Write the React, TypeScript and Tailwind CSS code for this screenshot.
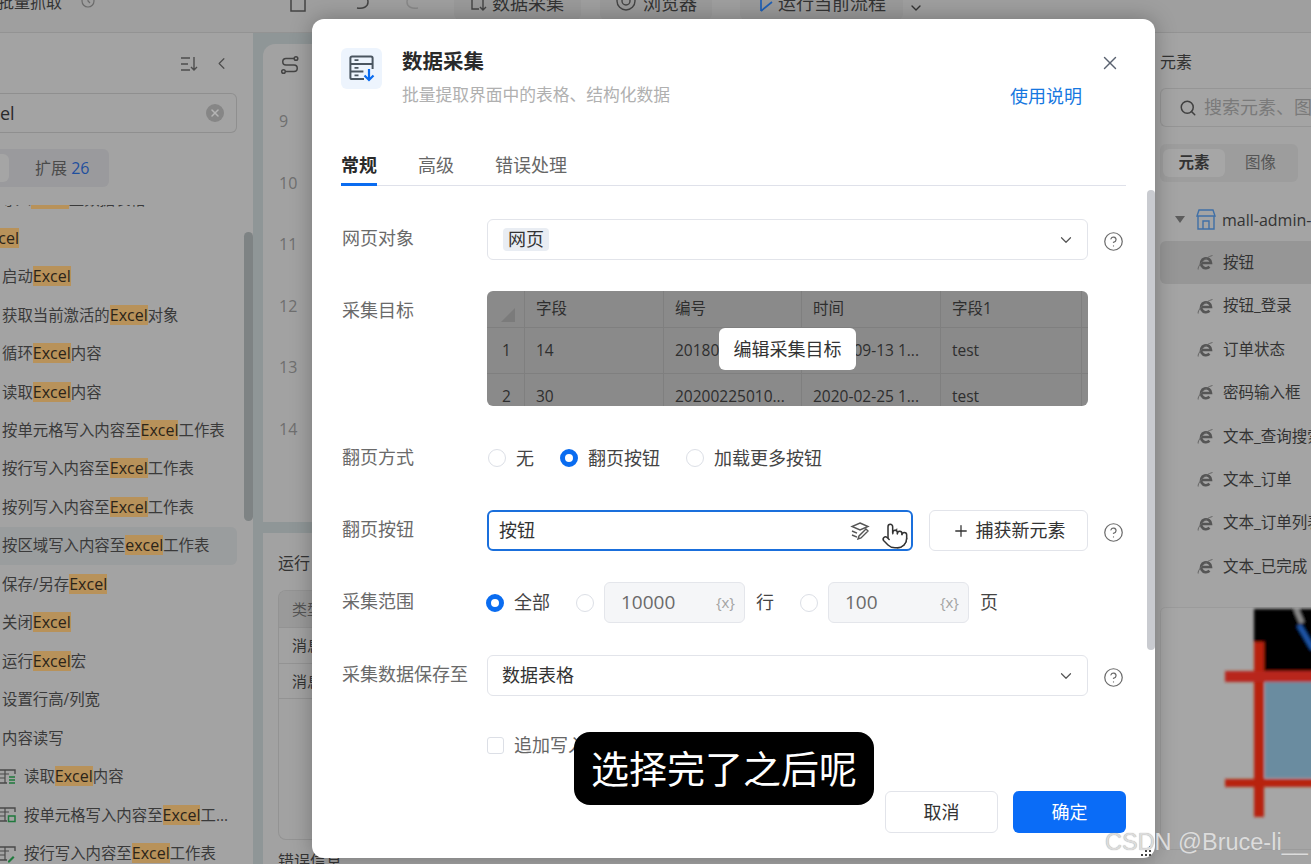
import { ChevronDown, ChevronLeft, CircleHelp, Plus, Pointer, Search, X } from 'lucide-react';
import type { ReactNode } from 'react';

const font = "font-['Open_Sans','Noto_Sans_CJK_SC',sans-serif]";

// highlighted search hit in the command list
const Hit = ({ children }: { children: ReactNode }) => (
  <span className="inline-block h-[20px] bg-[#b8925a] text-[16px] leading-[20px] text-[#2b2419]">{children}</span>
);

const SheetIcon = ({ kind }: { kind: 'lines' | 'box' | 'pen' }) => (
  <svg width="18" height="18" viewBox="0 0 18 18" fill="none" className="-ml-[4px] shrink-0">
    <path d="M17 6V2H1v13h8" stroke="#4a4a4a" strokeWidth="1.4" />
    <path d="M1 6h10M7 2v13M1 10h6" stroke="#4a4a4a" strokeWidth="1.2" />
    {kind === 'lines' && <path d="M11 9h6M11 12h6M11 15h6" stroke="#1f7a3d" strokeWidth="1.6" />}
    {kind === 'box' && <rect x="10.5" y="10" width="6.5" height="5.5" stroke="#1f7a3d" strokeWidth="1.5" />}
    {kind === 'pen' && <path d="M10 16l5-5 1.5 1.5-5 5H10z" fill="#1f7a3d" />}
  </svg>
);

const ListRow = ({ children, active }: { children: ReactNode; active?: boolean }) => (
  <div className={`flex h-[38.47px] w-[237px] items-center gap-[8px] whitespace-nowrap rounded-r-md pl-[2px] text-[15.4px] text-[#3a3a3a] ${active ? 'bg-[#9a9d9e]' : ''}`}>
    {children}
  </div>
);

const Sidebar = () => (
  <div className="relative flex h-full w-[253px] shrink-0 flex-col overflow-hidden bg-[#a3a3a3]">
    <div className="flex items-center justify-end gap-[14px] pr-[22px] pt-[21px] text-[#4d4d4d]">
      <svg width="18" height="16" viewBox="0 0 18 16" fill="none" stroke="#4d4d4d" strokeWidth="1.4">
        <path d="M1 2h9M1 8h7M1 14h9M14 1v13M11 11l3 3 3-3" />
      </svg>
      <ChevronLeft size={19} strokeWidth={1.5} />
    </div>
    <div className="mt-[20px] flex h-[40px] w-[237px] items-center justify-between rounded-r-md border border-l-0 border-[#8f8f8f] pr-[12px] text-[18px] text-[#2a2a2a]">
      <span>el</span>
      <span className="flex h-[18px] w-[18px] items-center justify-center rounded-full bg-[#868686]">
        <X size={12} strokeWidth={3} className="text-[#b5b5b5]" />
      </span>
    </div>
    <div className="mt-[16px] flex h-[38px] w-[109px] items-center rounded-r-md bg-[#9a9a9d] pr-[4px]">
      <span className="h-[28px] w-[9px] rounded-r-md bg-[#a5a5a5]" />
      <span className="ml-[26px] whitespace-nowrap text-[16px] text-[#4a4a4a]">
        扩展 <span className="text-[#1f4f9e]">26</span>
      </span>
    </div>
    <div className="mt-[18px] min-h-0 flex-1 overflow-hidden">
      <div className="-mt-[24.5px]">
        <ListRow><span className="-ml-[2px]">导入<Hit>Excel</Hit>至数据表格</span></ListRow>
        <ListRow><span className="-ml-[21px]"><Hit>Excel</Hit></span></ListRow>
        <ListRow><span>启动<Hit>Excel</Hit></span></ListRow>
        <ListRow><span>获取当前激活的<Hit>Excel</Hit>对象</span></ListRow>
        <ListRow><span>循环<Hit>Excel</Hit>内容</span></ListRow>
        <ListRow><span>读取<Hit>Excel</Hit>内容</span></ListRow>
        <ListRow><span>按单元格写入内容至<Hit>Excel</Hit>工作表</span></ListRow>
        <ListRow><span>按行写入内容至<Hit>Excel</Hit>工作表</span></ListRow>
        <ListRow><span>按列写入内容至<Hit>Excel</Hit>工作表</span></ListRow>
        <ListRow active><span>按区域写入内容至<Hit>excel</Hit>工作表</span></ListRow>
        <ListRow><span>保存/另存<Hit>Excel</Hit></span></ListRow>
        <ListRow><span>关闭<Hit>Excel</Hit></span></ListRow>
        <ListRow><span>运行<Hit>Excel</Hit>宏</span></ListRow>
        <ListRow><span>设置行高/列宽</span></ListRow>
        <ListRow><span>内容读写</span></ListRow>
        <ListRow><SheetIcon kind="lines" /><span>读取<Hit>Excel</Hit>内容</span></ListRow>
        <ListRow><SheetIcon kind="box" /><span>按单元格写入内容至<Hit>Excel</Hit>工...</span></ListRow>
        <ListRow><SheetIcon kind="pen" /><span>按行写入内容至<Hit>Excel</Hit>工作表</span></ListRow>
      </div>
    </div>
    {/* list scrollbar */}
    <div className="absolute left-[244px] top-[199px] h-[289px] w-[9px] rounded-full bg-[#7e8384]" />
  </div>
);

const Center = () => (
  <div className="flex h-full min-w-0 flex-1 flex-col gap-[11px] bg-[#8f9697] pl-[10px] pt-[11px]">
    <div className="h-[478px] rounded-tl-xl bg-[#a2a2a2] pl-[16px] text-[#6f6f6f]">
      <svg width="20" height="20" viewBox="0 0 20 20" fill="none" stroke="#444" strokeWidth="1.5" className="ml-[1px] mt-[11px]">
        <circle cx="16" cy="3.5" r="1.8" />
        <circle cx="3.5" cy="16.5" r="1.8" />
        <path d="M14 3.5H6a3 3 0 0 0 0 6.5h8a3 3 0 0 1 0 6.5H6" />
      </svg>
      <div className="mt-[16px] flex flex-col text-[16px] leading-[61.6px]">
        <span>9</span><span>10</span><span>11</span><span>12</span><span>13</span><span>14</span>
      </div>
    </div>
    <div className="min-h-0 flex-1 overflow-hidden bg-[#a2a2a2] pl-[15px] pt-[19px] text-[16px] text-[#333]">
      <div className="whitespace-nowrap leading-[22px]">运行日志</div>
      <div className="mt-[16px] h-[250px] overflow-hidden rounded-l-lg border border-r-0 border-[#939393] text-[15px]">
        <div className="flex h-[36px] items-center bg-[#9a9a9a] pl-[13px] text-[#555]">类型</div>
        <div className="flex h-[36px] items-center border-t border-[#939393] pl-[13px]">消息</div>
        <div className="flex h-[36px] items-center border-y border-[#939393] pl-[13px]">消息</div>
      </div>
      <div className="mt-[11px] whitespace-nowrap leading-[20px]">错误信息</div>
    </div>
  </div>
);

const IeIcon = () => (
  <svg width="17" height="17" viewBox="0 0 17 17" fill="none" className="shrink-0">
    <path d="M4 9h10a5 5 0 1 0-1.5 3.8" stroke="#555" strokeWidth="2.6" />
    <path d="M1.2 15.5C0 12.5 8 3 15.5 1.5" stroke="#666" strokeWidth="1" />
  </svg>
);

const RightRow = ({ label, active }: { label: string; active?: boolean }) => (
  <div className={`flex h-[43.4px] items-center gap-[9px] whitespace-nowrap rounded-l-md pl-[37px] text-[15.5px] text-[#333] ${active ? 'bg-[#969696]' : ''}`}>
    <IeIcon />
    <span>{label}</span>
  </div>
);

const RightPanel = () => (
  <div className="flex h-full w-[156px] shrink-0 flex-col overflow-hidden bg-[#a4a4a4] pl-[5px]">
    <div className="mt-[17px] shrink-0 text-[16px] leading-[24px] text-[#333]">元素</div>
    <div className="mt-[14px] flex h-[39px] w-[170px] shrink-0 items-center gap-[7px] whitespace-nowrap rounded-l-md border border-r-0 border-[#959595] pl-[18px] text-[18px] text-[#7a7a7a]">
      <Search size={18} className="shrink-0 text-[#404040]" />
      <span>搜索元素、图像</span>
    </div>
    <div className="mt-[17px] flex h-[38px] w-[138px] shrink-0 items-center rounded-md bg-[#9d9d9d] pl-[3px] text-[15.5px]">
      <span className="flex h-[28px] w-[62px] items-center justify-center rounded-md bg-[#a6a6a6] font-bold text-[#333]">元素</span>
      <span className="ml-[20px] text-[#555]">图像</span>
    </div>
    <div className="mt-[20px] flex h-[35px] shrink-0 items-center whitespace-nowrap pl-[15px] text-[16px] text-[#333]">
      <svg width="10" height="7" viewBox="0 0 10 7" className="shrink-0"><path d="M0 0h10L5 7z" fill="#5c5c5c" /></svg>
      <svg width="20" height="21" viewBox="0 0 20 21" fill="none" stroke="#3f6fa6" strokeWidth="1.4" className="ml-[11px] shrink-0">
        <path d="M3 1h14l2 6H1zM2 7v13h16V7M7 20v-8h6v8M1 7h18" />
      </svg>
      <span className="ml-[6px]">mall-admin-web</span>
    </div>
    <div className="mt-[4px] shrink-0">
      <RightRow label="按钮" active />
      <RightRow label="按钮_登录" />
      <RightRow label="订单状态" />
      <RightRow label="密码输入框" />
      <RightRow label="文本_查询搜索" />
      <RightRow label="文本_订单" />
      <RightRow label="文本_订单列表" />
      <RightRow label="文本_已完成" />
    </div>
    {/* blurred element preview */}
    <svg width="151" height="256" viewBox="1160 608 151 256" className="mt-[19px] shrink-0">
      <defs>
        <filter id="soft"><feGaussianBlur stdDeviation="1.4" /></filter>
      </defs>
      <rect x="1160.5" y="608.5" width="160" height="242" rx="5" fill="#a6a6a6" stroke="#9b9b9b" />
      <g filter="url(#soft)">
        <rect x="1254" y="610" width="60" height="64" fill="#000" />
        <path d="M1296 610l6 14" stroke="#8a8a8a" strokeWidth="5" />
        <path d="M1299 626l14 24" stroke="#1d55a8" strokeWidth="5" />
        <rect x="1265" y="683" width="50" height="96" fill="#6a8ca0" />
        <rect x="1254" y="643" width="10" height="175" fill="#b8210f" />
        <rect x="1225" y="672" width="90" height="11" fill="#b8281a" />
        <rect x="1225" y="780" width="90" height="8" fill="#b8210f" />
      </g>
    </svg>
  </div>
);

const TopBar = () => (
  <div className="flex h-[33px] shrink-0 overflow-hidden border-b border-[#939393] bg-[#9f9f9f] text-[18px] text-[#333]">
    <div className="flex w-[253px] shrink-0 items-start">
      <span className="-ml-[2px] -mt-[8px] whitespace-nowrap text-[16px] leading-[20px]">批量抓取</span>
      <svg width="14" height="14" viewBox="0 0 14 14" fill="none" stroke="#6b6b6b" strokeWidth="1.2" className="-mt-[6px] ml-[19px]">
        <circle cx="7" cy="7" r="6" /><path d="M7 4v3l2 2" />
      </svg>
    </div>
    <div className="-mt-[8px] flex items-start pl-[37px] leading-[22px]">
      <svg width="16" height="20" viewBox="0 0 16 20" fill="none" stroke="#444" strokeWidth="1.5"><rect x="1" y="1" width="14" height="18" /></svg>
      <svg width="14" height="18" viewBox="0 0 14 18" fill="none" stroke="#444" strokeWidth="1.5" className="ml-[49px]"><path d="M2 16c6 1 11-1 11-6 0-3-2-5-4-6" /></svg>
      <svg width="14" height="18" viewBox="0 0 14 18" fill="none" stroke="#888" strokeWidth="1.5" className="ml-[37px]"><path d="M12 16C6 17 1 15 1 10c0-3 2-5 4-6" /></svg>
      <span className="ml-[34px] flex h-[28px] items-start whitespace-nowrap rounded-md bg-[#9a9a9a] pl-[17px] pr-[17px]">
        <svg width="16" height="20" viewBox="0 0 16 20" fill="none" stroke="#444" strokeWidth="1.4" className="mr-[5px]"><path d="M1 5v12h7M12 8v10M9 15l3 3 3-3" /></svg>
        数据采集
      </span>
      <span className="ml-[19px] flex h-[28px] items-start whitespace-nowrap rounded-md bg-[#9a9a9a] pl-[16px] pr-[15px]">
        <svg width="20" height="20" viewBox="0 0 20 20" fill="none" stroke="#444" strokeWidth="1.4" className="mr-[7px]"><circle cx="10" cy="9" r="9" /><circle cx="10" cy="9" r="4" /></svg>
        浏览器
      </span>
      <span className="ml-[28px] flex h-[28px] items-start whitespace-nowrap rounded-md bg-[#9a9a9a] pl-[19px] pr-[17px]">
        <svg width="15" height="20" viewBox="0 0 15 20" fill="none" stroke="#1f5fb4" strokeWidth="1.7" className="mr-[4px]"><path d="M2 1v18M2 19l11-9" /></svg>
        运行当前流程
      </span>
      <ChevronDown size={16} strokeWidth={2} className="ml-[5px] mt-[8px] text-[#333]" />
    </div>
  </div>
);

const Radio = ({ on, className = '' }: { on?: boolean; className?: string }) => (
  <span className={`box-border block h-[18px] w-[18px] shrink-0 rounded-full bg-white ${on ? 'border-[5px] border-[#0a6cf0]' : 'border border-[#dcdfe6]'} ${className}`} />
);

const Help = () => <CircleHelp size={21} strokeWidth={1.4} className="ml-[15px] mt-[3px] shrink-0 text-[#6b6b6b]" />;

const Label = ({ children, className = '' }: { children: ReactNode; className?: string }) => (
  <div className={`w-[146px] shrink-0 whitespace-nowrap pl-[1px] text-[18px] text-[#6a6a6a] ${className}`}>{children}</div>
);

const VarInput = ({ value, className = '' }: { value: string; className?: string }) => (
  <span className={`flex h-[41px] w-[141px] shrink-0 items-center justify-between rounded-md border border-[#e4e6eb] bg-[#f5f6f8] pl-[16px] pr-[9px] text-[19px] text-[#6a6a6a] ${className}`}>
    <span>{value}</span>
    <span className="text-[15px] text-[#a3a3a3]">{'{x}'}</span>
  </span>
);

const ValueSelect = ({ children }: { children: ReactNode }) => (
  <div className="flex h-[41px] w-[601px] shrink-0 items-center justify-between rounded-md border border-[#e2e4ea] bg-white pr-[12px] text-[18px] text-[#333]">
    {children}
    <ChevronDown size={18} strokeWidth={1.6} className="text-[#555]" />
  </div>
);

const cells = [
  ['', '字段', '编号', '时间', '字段1', ''],
  ['1', '14', '20180', '2018-09-13 1...', 'test', ''],
  ['2', '30', '20200225010...', '2020-02-25 1...', 'test', ''],
];

const TargetTable = () => (
  <div className="relative h-[115px] w-[601px] shrink-0 overflow-hidden rounded-md bg-[#8a8a8a] text-[15.5px] text-[#2e2e2e]">
    {cells.map((row, i) => (
      <div
        key={i}
        className={`grid grid-cols-[38px_139px_138px_139px_141px_6px] ${i === 0 ? 'h-[36px]' : 'h-[46px] border-t border-[#7f7f7f]'}`}
      >
        {row.map((c, j) => (
          <div key={j} className={`flex items-center whitespace-nowrap border-r border-[#7f7f7f] ${j === 0 ? 'pl-[15px]' : 'pl-[11px]'}`}>
            {c}
            {i === 0 && j === 0 && (
              <svg width="14" height="14" viewBox="0 0 14 14" className="-ml-[1px] mt-[12px]"><path d="M14 0v14H0z" fill="#7b7b7b" /></svg>
            )}
          </div>
        ))}
      </div>
    ))}
    {/* hover action on the preview table */}
    <div className="absolute left-[232px] top-[37px] flex h-[42px] w-[137px] items-center justify-center rounded-md bg-white text-[18px] text-[#333]">
      编辑采集目标
    </div>
  </div>
);

const DataIcon = () => (
  <svg width="26" height="27" viewBox="0 0 26 27" fill="none">
    <path d="M15 24H3a1.6 1.6 0 0 1-1.6-1.6V3A1.6 1.6 0 0 1 3 1.4h19A1.6 1.6 0 0 1 23.6 3v11" stroke="#4a5560" strokeWidth="2" />
    <path d="M1.4 9h22M1.4 16.5h13" stroke="#4a5560" strokeWidth="2" />
    <path d="M5.5 5.2h4M5.5 12.8h4M5.5 20.3h4" stroke="#4a5560" strokeWidth="1.7" />
    <path d="M20 14v11M15.5 20.5L20 25l4.5-4.5" stroke="#0a6cf0" strokeWidth="2.2" />
  </svg>
);

const Modal = () => (
  <div className="absolute left-[312px] top-[19px] flex h-[839px] w-[843px] flex-col rounded-xl bg-white px-[29px] shadow-[0_0_22px_rgba(0,0,0,0.28)]">
    <div className="flex h-[100px] shrink-0 pt-[29px]">
      <div className="flex h-[41px] w-[41px] shrink-0 items-center justify-center rounded-md bg-[#edf4fd]">
        <DataIcon />
      </div>
      <div className="ml-[20px] flex-1">
        <div className="-mt-[1px] text-[20.5px] font-bold leading-[28px] text-[#2a2a2a]">数据采集</div>
        <div className="mt-[8px] text-[16.75px] leading-[24px] text-[#b0b0b0]">批量提取界面中的表格、结构化数据</div>
      </div>
      <div className="flex flex-col items-end">
        <X size={22} strokeWidth={1.5} className="mr-[5px] mt-[4px] text-[#5a6270]" />
        <span className="mr-[44px] mt-[8px] text-[18px] leading-[28px] text-[#1677e0]">使用说明</span>
      </div>
    </div>

    <div className="mt-[33px] flex h-[34px] shrink-0 border-b border-[#dfe1ea] text-[18px] leading-[26px] text-[#666]">
      <span className="h-[34px] w-[36px] whitespace-nowrap border-b-[3px] border-[#0a6cf0] font-bold text-[#2a2a2a]">常规</span>
      <span className="ml-[41px]">高级</span>
      <span className="ml-[41px]">错误处理</span>
    </div>

    <div className="min-h-0 flex-1">
      <div className="mt-[33px] flex items-center">
        <Label className="-mt-[3px]">网页对象</Label>
        <ValueSelect>
          <span className="ml-[15px] rounded-sm bg-[#e9edf3] px-[5px] leading-[23px]">网页</span>
        </ValueSelect>
        <Help />
      </div>

      <div className="mt-[31px] flex">
        <Label className="mt-[6px]">采集目标</Label>
        <TargetTable />
      </div>

      <div className="mt-[40px] flex h-[24px] items-center text-[18px] text-[#444]">
        <Label className="-mt-[2px]">翻页方式</Label>
        <Radio className="ml-[1px]" />
        <span className="ml-[10px]">无</span>
        <Radio on className="ml-[26px]" />
        <span className="ml-[10px]">翻页按钮</span>
        <Radio className="ml-[26px]" />
        <span className="ml-[10px]">加载更多按钮</span>
      </div>

      <div className="mt-[40px] flex items-center">
        <Label className="-mt-[3px]">翻页按钮</Label>
        <div className="relative flex h-[41px] w-[426px] shrink-0 items-center justify-between rounded-md border-2 border-[#1a6fdc] pl-[10px] pr-[10px] text-[18px] text-[#333]">
          <span>按钮</span>
          <span className="flex items-center gap-[15px]">
            <svg width="20" height="18" viewBox="0 0 20 18" fill="none" stroke="#555" strokeWidth="1.4">
              <path d="M10 1l8 3.5-8 3.5-8-3.5zM2 9l5 2.2M2 13l5 2.2M18 9l-7 7-3 1 1-3 7-7z" />
            </svg>
            <ChevronDown size={16} strokeWidth={1.6} className="text-[#555]" />
          </span>
          {/* mouse cursor in the recording */}
          <Pointer size={28} strokeWidth={1.3} className="absolute left-[392px] top-[10px] fill-white text-[#333]" />
        </div>
        <div className="ml-[16px] flex h-[41px] w-[159px] shrink-0 items-center justify-center gap-[6px] rounded-md border border-[#e2e4ea] text-[18px] text-[#333]">
          <Plus size={18} strokeWidth={1.7} />
          <span>捕获新元素</span>
        </div>
        <Help />
      </div>

      <div className="mt-[31px] flex h-[41px] items-center text-[18px] text-[#444]">
        <Label className="-mt-[2px]">采集范围</Label>
        <Radio on className="-ml-[1px]" />
        <span className="ml-[10px]">全部</span>
        <Radio className="ml-[26px]" />
        <VarInput value="10000" className="ml-[10px]" />
        <span className="ml-[11px]">行</span>
        <Radio className="ml-[26px]" />
        <VarInput value="100" className="ml-[10px]" />
        <span className="ml-[11px]">页</span>
      </div>

      <div className="mt-[32px] flex items-center">
        <Label className="-mt-[3px]">采集数据保存至</Label>
        <ValueSelect>
          <span className="ml-[14px]">数据表格</span>
        </ValueSelect>
        <Help />
      </div>

      <div className="mt-[37px] flex h-[24px] items-center pl-[146px] text-[18px] text-[#666]">
        <span className="h-[17px] w-[17px] rounded-[3px] border border-[#dcdfe6]" />
        <span className="ml-[10px]">追加写入</span>
      </div>
    </div>

    <div className="flex shrink-0 justify-end gap-[15px] pb-[25px] text-[18px]">
      <span className="flex h-[42px] w-[113px] items-center justify-center rounded-md border border-[#e2e4ea] text-[#333]">取消</span>
      <span className="flex h-[42px] w-[113px] items-center justify-center rounded-md bg-[#0a6cf7] text-white">确定</span>
    </div>

    {/* modal scrollbar */}
    <div className="absolute left-[835px] top-[171px] h-[460px] w-[8px] rounded-full bg-[#c9cbd0]" />
    {/* resize grip */}
    <svg width="14" height="12" viewBox="0 0 14 12" className="absolute bottom-[1px] right-[2px]" fill="#444">
      <rect x="10" y="1" width="2" height="2" />
      <rect x="6" y="5" width="2" height="2" /><rect x="10" y="5" width="2" height="2" />
      <rect x="2" y="9" width="2" height="2" /><rect x="6" y="9" width="2" height="2" /><rect x="10" y="9" width="2" height="2" />
    </svg>
  </div>
);

export default function App() {
  return (
    <div className={`relative h-[864px] w-[1311px] overflow-hidden ${font}`}>
      <div className="flex h-full flex-col">
        <TopBar />
        <div className="flex min-h-0 flex-1">
          <Sidebar />
          <Center />
          <RightPanel />
        </div>
      </div>

      <Modal />

      {/* video subtitle */}
      <div className="absolute left-[574px] top-[732px] flex h-[73px] w-[300px] items-center justify-center rounded-2xl bg-black text-[38px] text-white">
        选择完了之后呢
      </div>

      {/* blog watermark */}
      <div className="absolute left-[1105px] top-[828px] whitespace-nowrap font-['Liberation_Sans',sans-serif] text-[23.5px] leading-[28px] text-[#dcdcdc] [text-shadow:0_0_1px_#999]">
        CSDN @Bruce-li__
      </div>
    </div>
  );
}
